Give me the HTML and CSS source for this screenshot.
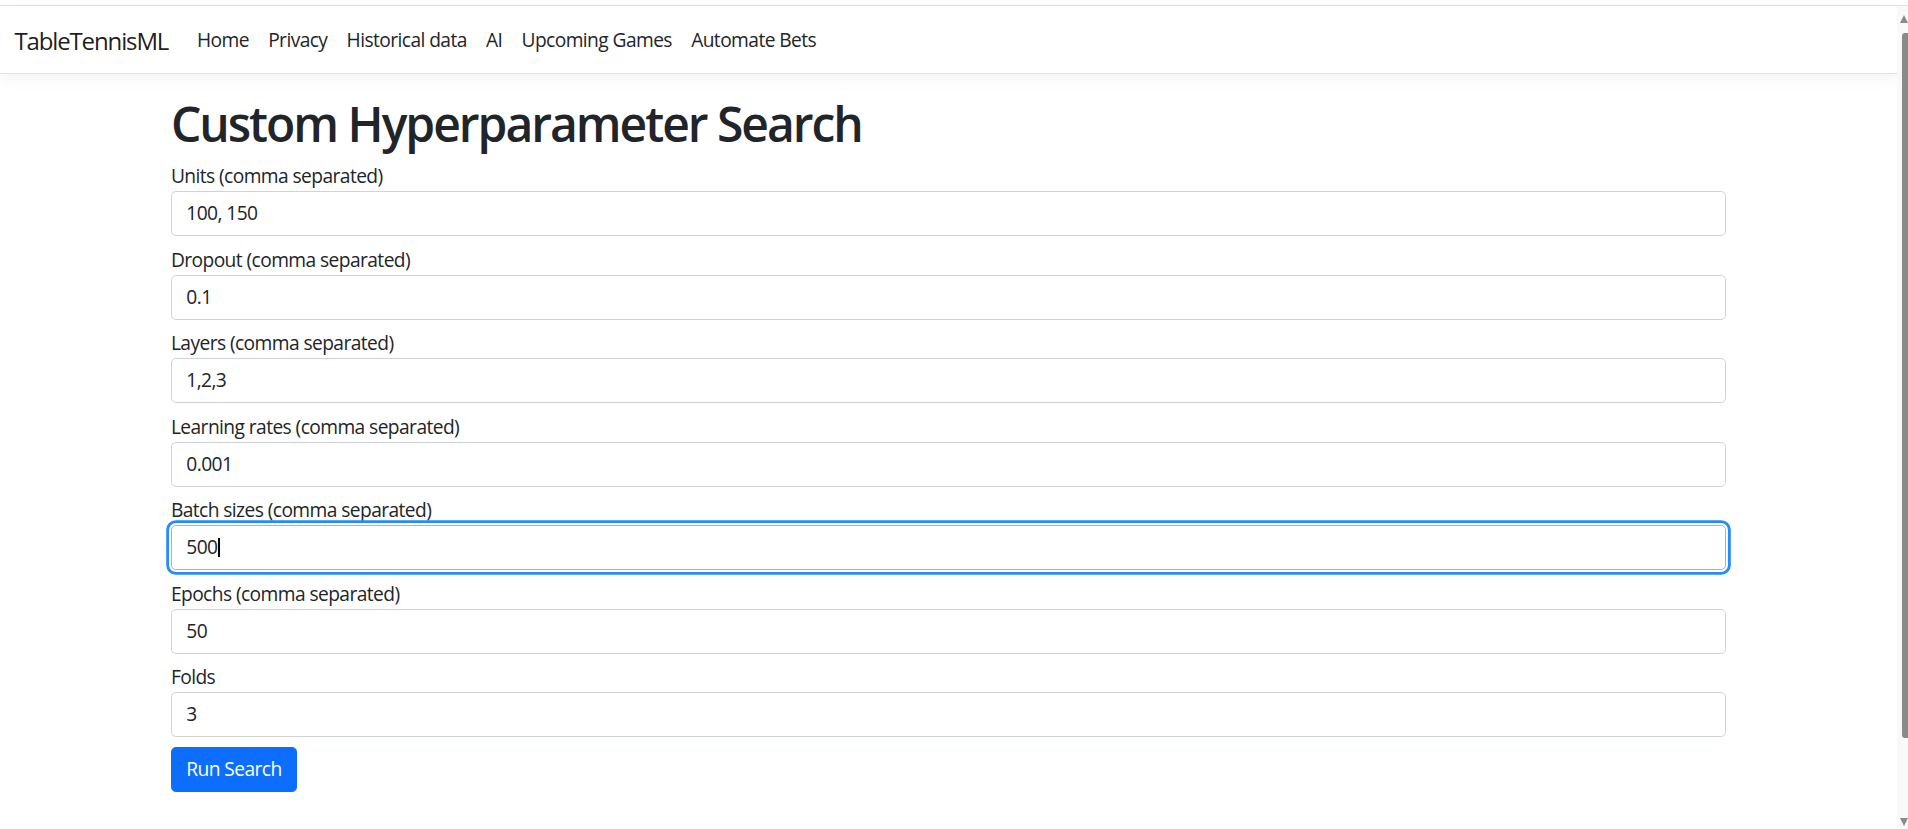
FILE: index.html
```html
<!DOCTYPE html>
<html lang="en">
  <head>
    <meta charset="UTF-8" />
    <meta name="viewport" content="width=device-width, initial-scale=1.0" />
    <title>Custom Hyperparameter Search - TableTennisML</title>
    <link rel="stylesheet" href="styles.css">
  </head>
  <body>
    <div class="chrome-line"></div>
    <div class="window">
      <div class="page">
        <header>
          <nav class="navbar">
            <a href="#" class="brand">TableTennisML</a>
            <ul class="nav">
              <li><a href="#" class="nav-link">Home</a></li>
              <li><a href="#" class="nav-link">Privacy</a></li>
              <li><a href="#" class="nav-link">Historical data</a></li>
              <li><a href="#" class="nav-link">AI</a></li>
              <li><a href="#" class="nav-link">Upcoming Games</a></li>
              <li><a href="#" class="nav-link">Automate Bets</a></li>
            </ul>
          </nav>
        </header>
        <div class="container">
          <main>
            <h1>Custom Hyperparameter Search</h1>
            <form>
              <div class="group">
                <label for="units">Units (comma separated)</label>
                <input id="units" class="field" type="text" value="100, 150" />
              </div>
              <div class="group">
                <label for="dropout">Dropout (comma separated)</label>
                <input id="dropout" class="field" type="text" value="0.1" />
              </div>
              <div class="group">
                <label for="layers">Layers (comma separated)</label>
                <input id="layers" class="field" type="text" value="1,2,3" />
              </div>
              <div class="group">
                <label for="rates">Learning rates (comma separated)</label>
                <input id="rates" class="field" type="text" value="0.001" />
              </div>
              <div class="group">
                <label for="batch">Batch sizes (comma separated)</label>
                <div class="field-wrap">
                  <input id="batch" class="field focused" type="text" value="500" />
                  <!-- caret drawn over the field, headless browsers hide the real one -->
                  <div class="caret-layer" aria-hidden="true"><span class="ghost">500</span><span class="caret"></span></div>
                </div>
              </div>
              <div class="group">
                <label for="epochs">Epochs (comma separated)</label>
                <input id="epochs" class="field" type="text" value="50" />
              </div>
              <div class="group">
                <label for="folds">Folds</label>
                <input id="folds" class="field" type="text" value="3" />
              </div>
              <button type="button" class="btn">Run Search</button>
            </form>
          </main>
        </div>
      </div>
      <div class="scrollbar">
        <span class="arrow up"></span>
        <span class="thumb"></span>
        <span class="arrow down"></span>
      </div>
    </div>
  </body>
</html>
```
FILE: styles.css
```css
* {
  box-sizing: border-box;
}
html,
body {
  margin: 0;
  height: 829px;
  overflow: hidden;
}
body {
  font-family: "Segoe UI", "Open Sans", sans-serif;
  font-size: 19.2px;
  line-height: 1.5;
  letter-spacing: -0.03em;
  color: #212529;
  background: #fff;
}
a {
  text-decoration: none;
}
.chrome-line {
  height: 6px;
  border-bottom: 1px solid #e1e1e1;
}
.window {
  display: flex;
  flex-direction: row;
  height: 823px;
}
.page {
  flex: 1;
  min-width: 0;
}

/* navbar */
.navbar {
  display: flex;
  flex-direction: row;
  align-items: center;
  padding: 10.6px 14.4px 8.6px;
  border-bottom: 1.2px solid #dee2e6;
  box-shadow: 0 4.8px 14.4px rgba(0, 0, 0, 0.05);
  margin-bottom: 20.8px;
}
.brand {
  font-size: 24px;
  line-height: 1.5;
  letter-spacing: -0.047em;
  padding: 6px 0;
  margin-right: 19.2px;
  color: rgba(0, 0, 0, 0.9);
}
.nav {
  display: flex;
  flex-direction: row;
  list-style: none;
  margin: 0;
  padding: 0;
}
.nav-link {
  display: block;
  padding: 9.6px;
  color: #212529;
}

/* content */
.container {
  max-width: 1584px;
  margin: 0 auto;
  padding: 0 14.4px;
}
main {
  padding-bottom: 19.2px;
}
h1 {
  margin: 0 0 9.6px;
  font-size: 48px;
  font-weight: 600;
  line-height: 1.2;
  letter-spacing: -0.042em;
}
.group {
  margin-bottom: 9.6px;
}
label {
  display: inline-block;
}
.field {
  display: block;
  width: 100%;
  padding: 7.2px 14.4px;
  font-family: inherit;
  font-size: 19.2px;
  line-height: 1.5;
  letter-spacing: inherit;
  color: #212529;
  background: #fff;
  border: 1.2px solid #ced4da;
  border-radius: 4.8px;
  outline: none;
}
.field.focused,
.field:focus {
  border-color: #86b7fe;
  box-shadow: 0 0 0 1.92px #fff, 0 0 0 4.8px #258cfb;
}
.field-wrap {
  position: relative;
}
.caret-layer {
  position: absolute;
  top: 0;
  left: 0;
  right: 0;
  bottom: 0;
  padding: 8.4px 15.6px;
  pointer-events: none;
  display: flex;
  align-items: center;
}
.ghost {
  color: transparent;
}
.caret {
  width: 2px;
  height: 19px;
  background: #000;
}
.btn {
  display: inline-block;
  padding: 7.2px 14.4px;
  font-family: inherit;
  font-size: 19.2px;
  line-height: 1.5;
  letter-spacing: inherit;
  color: #fff;
  background: #0d6efd;
  border: 1.2px solid #0d6efd;
  border-radius: 4.8px;
}

/* fake window scrollbar */
.scrollbar {
  width: 11px;
  display: flex;
  flex-direction: column;
  align-items: flex-end;
  background: #f9f9f9;
}
.arrow {
  width: 0;
  height: 0;
  border-left: 4px solid transparent;
  border-right: 4px solid transparent;
}
.arrow.up {
  margin-top: 9px;
  border-bottom: 8px solid #8a8a8a;
}
.arrow.down {
  margin-top: auto;
  margin-bottom: 3px;
  border-top: 8px solid #8a8a8a;
}
.thumb {
  width: 6px;
  height: 705px;
  margin-top: 10px;
  background: #8a8a8a;
  border-radius: 3px 0 0 3px;
}
```
